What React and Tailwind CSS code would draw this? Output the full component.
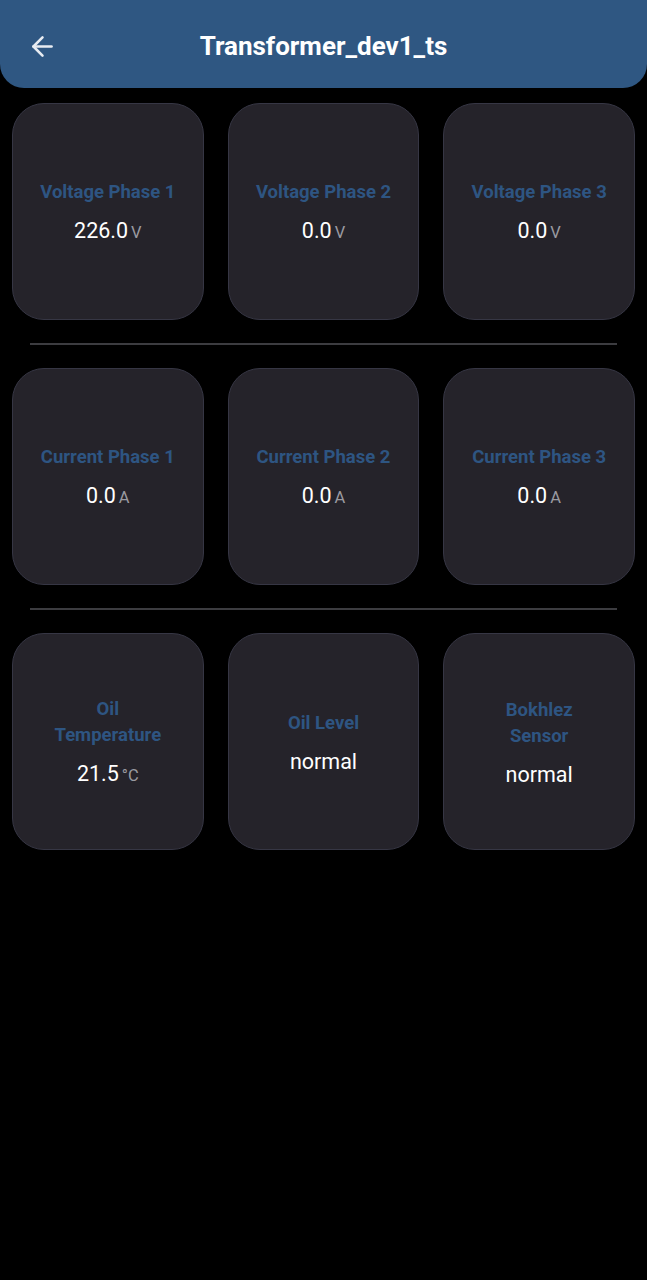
import React from "react";

const rows = [
  [
    { title: ["Voltage Phase 1"], value: "226.0", unit: "V" },
    { title: ["Voltage Phase 2"], value: "0.0", unit: "V" },
    { title: ["Voltage Phase 3"], value: "0.0", unit: "V" },
  ],
  [
    { title: ["Current Phase 1"], value: "0.0", unit: "A" },
    { title: ["Current Phase 2"], value: "0.0", unit: "A" },
    { title: ["Current Phase 3"], value: "0.0", unit: "A" },
  ],
  [
    { title: ["Oil", "Temperature"], value: "21.5", unit: "°C" },
    { title: ["Oil Level"], value: "normal", unit: "" },
    { title: ["Bokhlez", "Sensor"], value: "normal", unit: "" },
  ],
];

function Card({ title, value, unit }) {
  return (
    <div className="h-[217px] pt-[3px] rounded-[32px] bg-[#25232a] border border-[#363644] flex flex-col items-center justify-center">
      <div className="text-center text-[#2e5582] font-bold text-[18.5px] leading-[26px]">
        {title.map((t) => (
          <div key={t}>{t}</div>
        ))}
      </div>
      <div className="mt-[11px] flex items-baseline text-white text-[21.5px] leading-[30px]">
        <span>{value}</span>
        {unit && <span className="ml-[3px] text-[16.5px] text-[#9a9aa0]">{unit}</span>}
      </div>
    </div>
  );
}

export default function App() {
  return (
    <div className="min-h-[1280px] bg-black" style={{ fontFamily: "Roboto, 'Noto Sans', sans-serif" }}>
      <div className="h-[88px] bg-[#2f5782] rounded-b-[24px] flex items-center relative">
        <div className="absolute left-[27px] top-[31px] text-[#e8ecf2]">
          <svg width="31" height="31" viewBox="0 0 24 24" fill="none" stroke="currentColor" strokeWidth="2" strokeLinecap="round" strokeLinejoin="round">
            <path d="M19 12H5" />
            <path d="M12 19l-7-7 7-7" />
          </svg>
        </div>
        <div className="w-full text-center text-white font-bold text-[26px] pt-[5px]">Transformer_dev1_ts</div>
      </div>
      <div className="px-[12px] pt-[15px]">
        {rows.map((row, i) => (
          <div key={i}>
            {i > 0 && <div className="mx-[18px] my-[23px] h-[2px] bg-[#3c3c40]" />}
            <div className="grid grid-cols-3 gap-[24px]">
              {row.map((c) => (
                <Card key={c.title.join(" ")} {...c} />
              ))}
            </div>
          </div>
        ))}
      </div>
    </div>
  );
}
